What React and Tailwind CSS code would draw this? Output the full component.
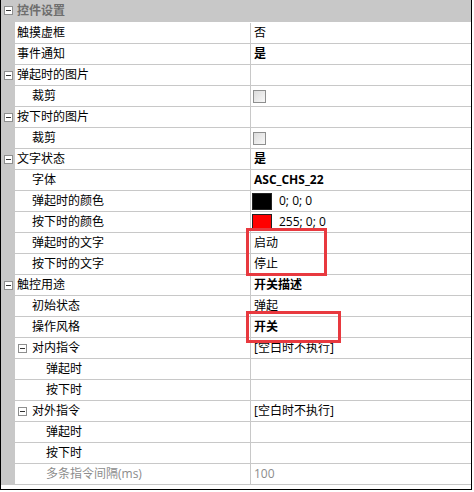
const rows = [
  { label: "触摸虚框", value: "否", level: 1 },
  { label: "事件通知", value: "是", bold: true, level: 1 },
  { label: "弹起时的图片", group: true, level: 1 },
  { label: "裁剪", check: true, level: 2 },
  { label: "按下时的图片", group: true, level: 1 },
  { label: "裁剪", check: true, level: 2 },
  { label: "文字状态", value: "是", bold: true, group: true, level: 1 },
  { label: "字体", value: "ASC_CHS_22", bold: true, level: 2 },
  { label: "弹起时的颜色", value: "0; 0; 0", swatch: "bg-black", level: 2 },
  { label: "按下时的颜色", value: "255; 0; 0", swatch: "bg-[#ff0000]", level: 2 },
  { label: "弹起时的文字", value: "启动", level: 2 },
  { label: "按下时的文字", value: "停止", level: 2 },
  { label: "触控用途", value: "开关描述", bold: true, group: true, level: 1 },
  { label: "初始状态", value: "弹起", level: 2 },
  { label: "操作风格", value: "开关", bold: true, level: 2 },
  { label: "对内指令", value: "[空白时不执行]", subgroup: true, level: 2 },
  { label: "弹起时", level: 3 },
  { label: "按下时", level: 3 },
  { label: "对外指令", value: "[空白时不执行]", subgroup: true, level: 2 },
  { label: "弹起时", level: 3 },
  { label: "按下时", level: 3 },
  { label: "多条指令间隔(ms)", value: "100", muted: true, level: 3 },
];

function Minus({ className = "" }) {
  return (
    <span className={`w-[9px] h-[9px] border border-[#8e8f8f] bg-white flex items-center justify-center ${className}`}>
      <span className="w-[5px] h-px bg-[#333]" />
    </span>
  );
}

function Row({ row }) {
  const pad = row.level === 1 ? "pl-[2px]" : row.level === 2 ? "pl-[17px]" : "pl-[31px]";
  return (
    <div className="flex h-[21px]">
      <div className="w-[14px] bg-[#c8c8c8] flex items-center justify-center shrink-0">
        {row.group && <Minus />}
      </div>
      <div className="flex flex-1 border-b border-[#c8c8c8]">
        <div className={`w-[236px] border-r border-[#c8c8c8] flex items-center ${row.subgroup ? "pl-[2px]" : pad} ${row.muted ? "text-[#8c8c8c]" : "text-black"}`}>
          {row.subgroup && <Minus className="ml-[1px] mr-[5px]" />}
          {row.label}
        </div>
        <div className={`flex-1 flex items-center pl-[3px] ${row.bold ? "font-bold" : ""} ${row.muted ? "text-[#8c8c8c]" : "text-black"}`}>
          {row.check && (
            <span className="w-[13px] h-[13px] border border-[#8e8f8f] bg-gradient-to-br from-[#dcdcdc] to-[#f8f8f8] ml-[-1px]" />
          )}
          {row.swatch && (
            <span className={`w-[20px] h-[17px] ${row.swatch} border border-[#222] ml-[-2px] mr-[7px]`} />
          )}
          {row.value}
        </div>
      </div>
    </div>
  );
}

export default function App() {
  return (
    <div
      className="w-[474px] h-[492px] bg-white text-[12px] leading-none"
      style={{ fontFamily: '"Open Sans", "Noto Sans CJK SC", sans-serif' }}
    >
      <div className="relative w-[472px] h-[490px] border-x border-b border-black bg-white">
        {/* header */}
        <div className="flex h-[23px]">
          <div className="w-[14px] bg-[#c8c8c8] flex items-center justify-center pb-[2px]">
            <Minus />
          </div>
          <div className="flex-1 bg-[#c8c8c8] border-b border-white flex items-center pl-[2px] pb-[1px] font-bold text-[12px] text-[#6e6e6e]">
            控件设置
          </div>
        </div>
        {rows.map((row, i) => (
          <Row key={i} row={row} />
        ))}

        {/* annotation boxes */}
        <div className="absolute left-[245px] top-[228px] w-[81px] h-[48px] border-[3px] border-[#e8393f]" />
        <div className="absolute left-[245px] top-[311px] w-[95px] h-[32px] border-[3px] border-[#e8393f]" />
      </div>
    </div>
  );
}
